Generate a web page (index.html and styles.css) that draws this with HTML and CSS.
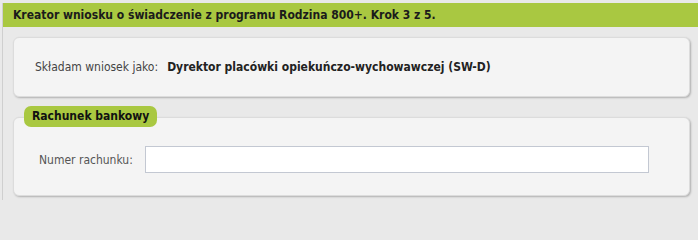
FILE: index.html
```html
<!DOCTYPE html>
<html lang="pl">
<head>
<meta charset="utf-8">
<title>Kreator wniosku</title>
<link rel="stylesheet" href="styles.css">
</head>
<body>
<div class="wrap">
  <div class="header">Kreator wniosku o świadczenie z programu Rodzina 800+. Krok 3 z 5.</div>
  <div class="content">
    <div class="card card-role">
      <span class="role-label">Składam wniosek jako:</span>
      <span class="role-value">Dyrektor placówki opiekuńczo-wychowawczej (SW-D)</span>
    </div>
    <div class="card card-bank">
      <div class="legend">Rachunek bankowy</div>
      <div class="field-row">
        <label class="field-label" for="nr">Numer rachunku:</label>
        <input class="field-input" id="nr" type="text">
      </div>
    </div>
  </div>
</div>
</body>
</html>
```

FILE: styles.css
```css
html, body {
  margin: 0;
  padding: 0;
  background: #e9e9e9;
  font-family: "DejaVu Sans Condensed", "DejaVu Sans", sans-serif;
}
body {
  height: 200px;
  overflow: hidden;
}
.wrap {
  margin: 3px 0 0 2px;
  border-left: 1px solid #cfcfcf;
  height: 197px;
}
.header {
  background: #a9c841;
  height: 24px;
  line-height: 24px;
  padding-left: 10px;
  font-weight: bold;
  font-size: 12px;
  color: #1b1b1b;
}
.content {
  padding: 10px 8px 0 10px;
}
.card {
  background: #f4f4f4;
  border: 1px solid #dcdcdc;
  border-radius: 6px;
  box-shadow: 1px 1px 2px #b0b0b0;
}
.card-role {
  height: 58px;
  display: flex;
  align-items: center;
  padding-left: 21px;
  font-size: 12px;
}
.role-label {
  color: #444;
  margin-right: 9px;
}
.role-value {
  color: #222;
  font-weight: bold;
}
.card-bank {
  margin-top: 20px;
  height: 77px;
}
.legend {
  display: inline-block;
  margin: -12px 0 0 10px;
  background: #a9c841;
  border-radius: 7px;
  height: 21px;
  line-height: 21px;
  padding: 0 8px 0 8px;
  font-weight: bold;
  font-size: 12px;
  color: #111;
  vertical-align: top;
}
.field-row {
  display: grid;
  grid-template-columns: 106px 504px;
  align-items: center;
  margin: 9px 0 0 25px;
}
.field-label {
  color: #555;
  font-size: 12px;
}
.field-input {
  box-sizing: border-box;
  height: 27px;
  width: 504px;
  margin: 0;
  border: 1px solid #c3c8d2;
  background: #fff;
}
```
